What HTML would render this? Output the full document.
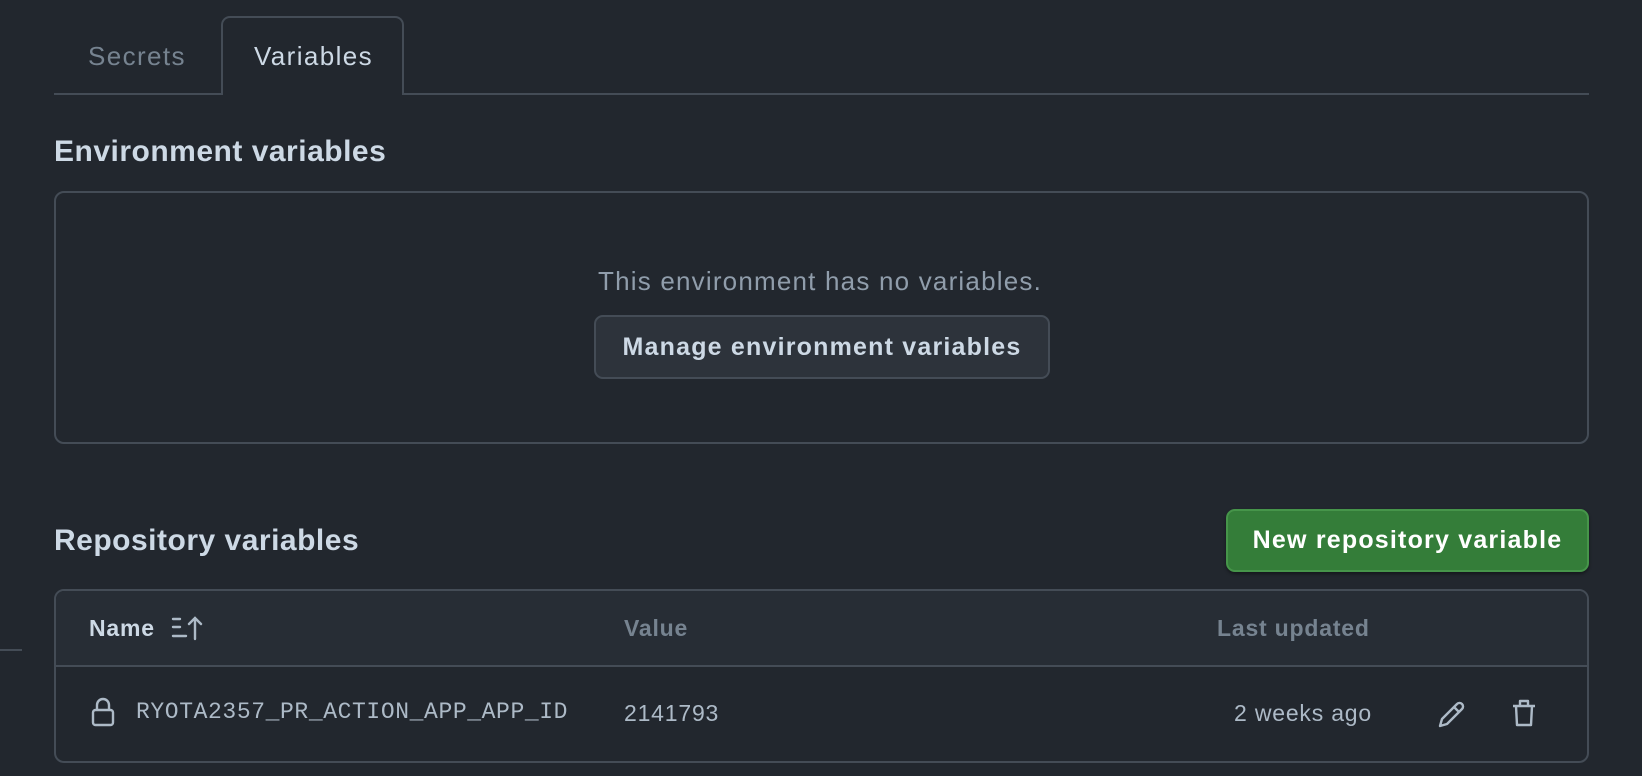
<!DOCTYPE html>
<html><head><meta charset="utf-8"><style>
body{margin:0;width:1642px;height:776px;background:#22272e;font-family:"Liberation Sans",sans-serif;color:#adbac7;position:relative;overflow:hidden}
.a{position:absolute}
.tabline{left:54px;top:93px;width:1535px;height:2px;background:#444c56}
.tab{top:16px;left:221px;width:183px;height:79px;border:2px solid #444c56;border-bottom:none;border-radius:9px 9px 0 0;background:#22272e;box-sizing:border-box}
.t{font-size:26px;line-height:26px;letter-spacing:1.4px}
h2{margin:0;position:absolute;font-size:30px;font-weight:bold;color:#cdd9e5;line-height:30px;letter-spacing:0.5px}
.box{border:2px solid #444c56;border-radius:10px;box-sizing:border-box}
.btn{border:2px solid #444c56;background:#2d333b;border-radius:9px;box-sizing:border-box;display:flex;align-items:center;justify-content:center;font-size:25px;letter-spacing:1.2px;font-weight:bold;color:#cdd9e5}
.mono{font-family:"Liberation Mono",monospace;font-size:23px;letter-spacing:0.6px;color:#adbac7}
.c{font-size:23px;letter-spacing:0.8px}
</style></head><body>
<div class="a tabline"></div>
<div class="a tab"></div>
<div class="a t" style="left:88px;top:43px;color:#768390">Secrets</div>
<div class="a t" style="left:254px;top:43px;color:#cdd9e5">Variables</div>
<h2 style="left:54px;top:137px">Environment variables</h2>
<div class="a box" style="left:54px;top:191px;width:1535px;height:253px"></div>
<div class="a" style="left:520px;width:600px;text-align:center;top:266px;font-size:26px;letter-spacing:1.2px;color:#909dab">This environment has no variables.</div>
<div class="a btn" style="left:594px;top:315px;width:456px;height:64px">Manage environment variables</div>
<h2 style="left:54px;top:526px">Repository variables</h2>
<div class="a" style="left:1226px;top:509px;width:363px;height:63px;background:#347d39;border:2px solid #46954a;border-radius:9px;box-sizing:border-box;display:flex;align-items:center;justify-content:center;font-size:25px;letter-spacing:1.2px;font-weight:bold;color:#fff;box-shadow:0 2px 3px rgba(0,0,0,.4)">New repository variable</div>
<div class="a" style="left:0;top:649px;width:22px;height:2px;background:#444c56"></div>
<div class="a box" style="left:54px;top:589px;width:1535px;height:174px;background:#22272e;overflow:hidden">
 <div style="height:74px;background:#272d35;border-bottom:2px solid #444c56"></div>
</div>
<div class="a c" style="left:89px;top:615px;font-weight:bold;color:#cdd9e5">Name</div>
<svg class="a" style="left:170px;top:614px" width="36" height="28" viewBox="0 0 36 28" fill="none" stroke="#adbac7" stroke-width="2.4" stroke-linecap="round"><path d="M3 5h7M3 13h7M3 22h13M25 25V4M19 10l6-6 6 6"/></svg>
<div class="a c" style="left:624px;top:615px;font-weight:bold;color:#768390">Value</div>
<div class="a c" style="left:1217px;top:615px;font-weight:bold;color:#768390">Last updated</div>
<svg class="a" style="left:91px;top:697px" width="24" height="30" viewBox="0 0 24 30" fill="none" stroke="#adbac7" stroke-width="2.4"><rect x="2" y="13" width="20" height="15" rx="2.5"/><path d="M6 13V8a6 6 0 0 1 12 0v5"/></svg>
<div class="a mono" style="left:136px;top:699px">RYOTA2357_PR_ACTION_APP_APP_ID</div>
<div class="a c" style="left:624px;top:700px;color:#adbac7">2141793</div>
<div class="a c" style="left:1150px;width:222px;text-align:right;top:700px;color:#adbac7">2 weeks ago</div>
<svg class="a" style="left:1436px;top:698px" width="32" height="32" viewBox="0 0 32 32" fill="none" stroke="#adbac7" stroke-width="2.4" stroke-linejoin="round"><path d="M4 28l2-7L21 6a3 3 0 0 1 5 5L11 26z M18 9l5 5"/></svg>
<svg class="a" style="left:1510px;top:697px" width="28" height="32" viewBox="0 0 28 32" fill="none" stroke="#adbac7" stroke-width="2.4" stroke-linejoin="round"><path d="M3 9h22M10 9V4h8v5M6 9l1 19h14l1-19"/></svg>
</body></html>
